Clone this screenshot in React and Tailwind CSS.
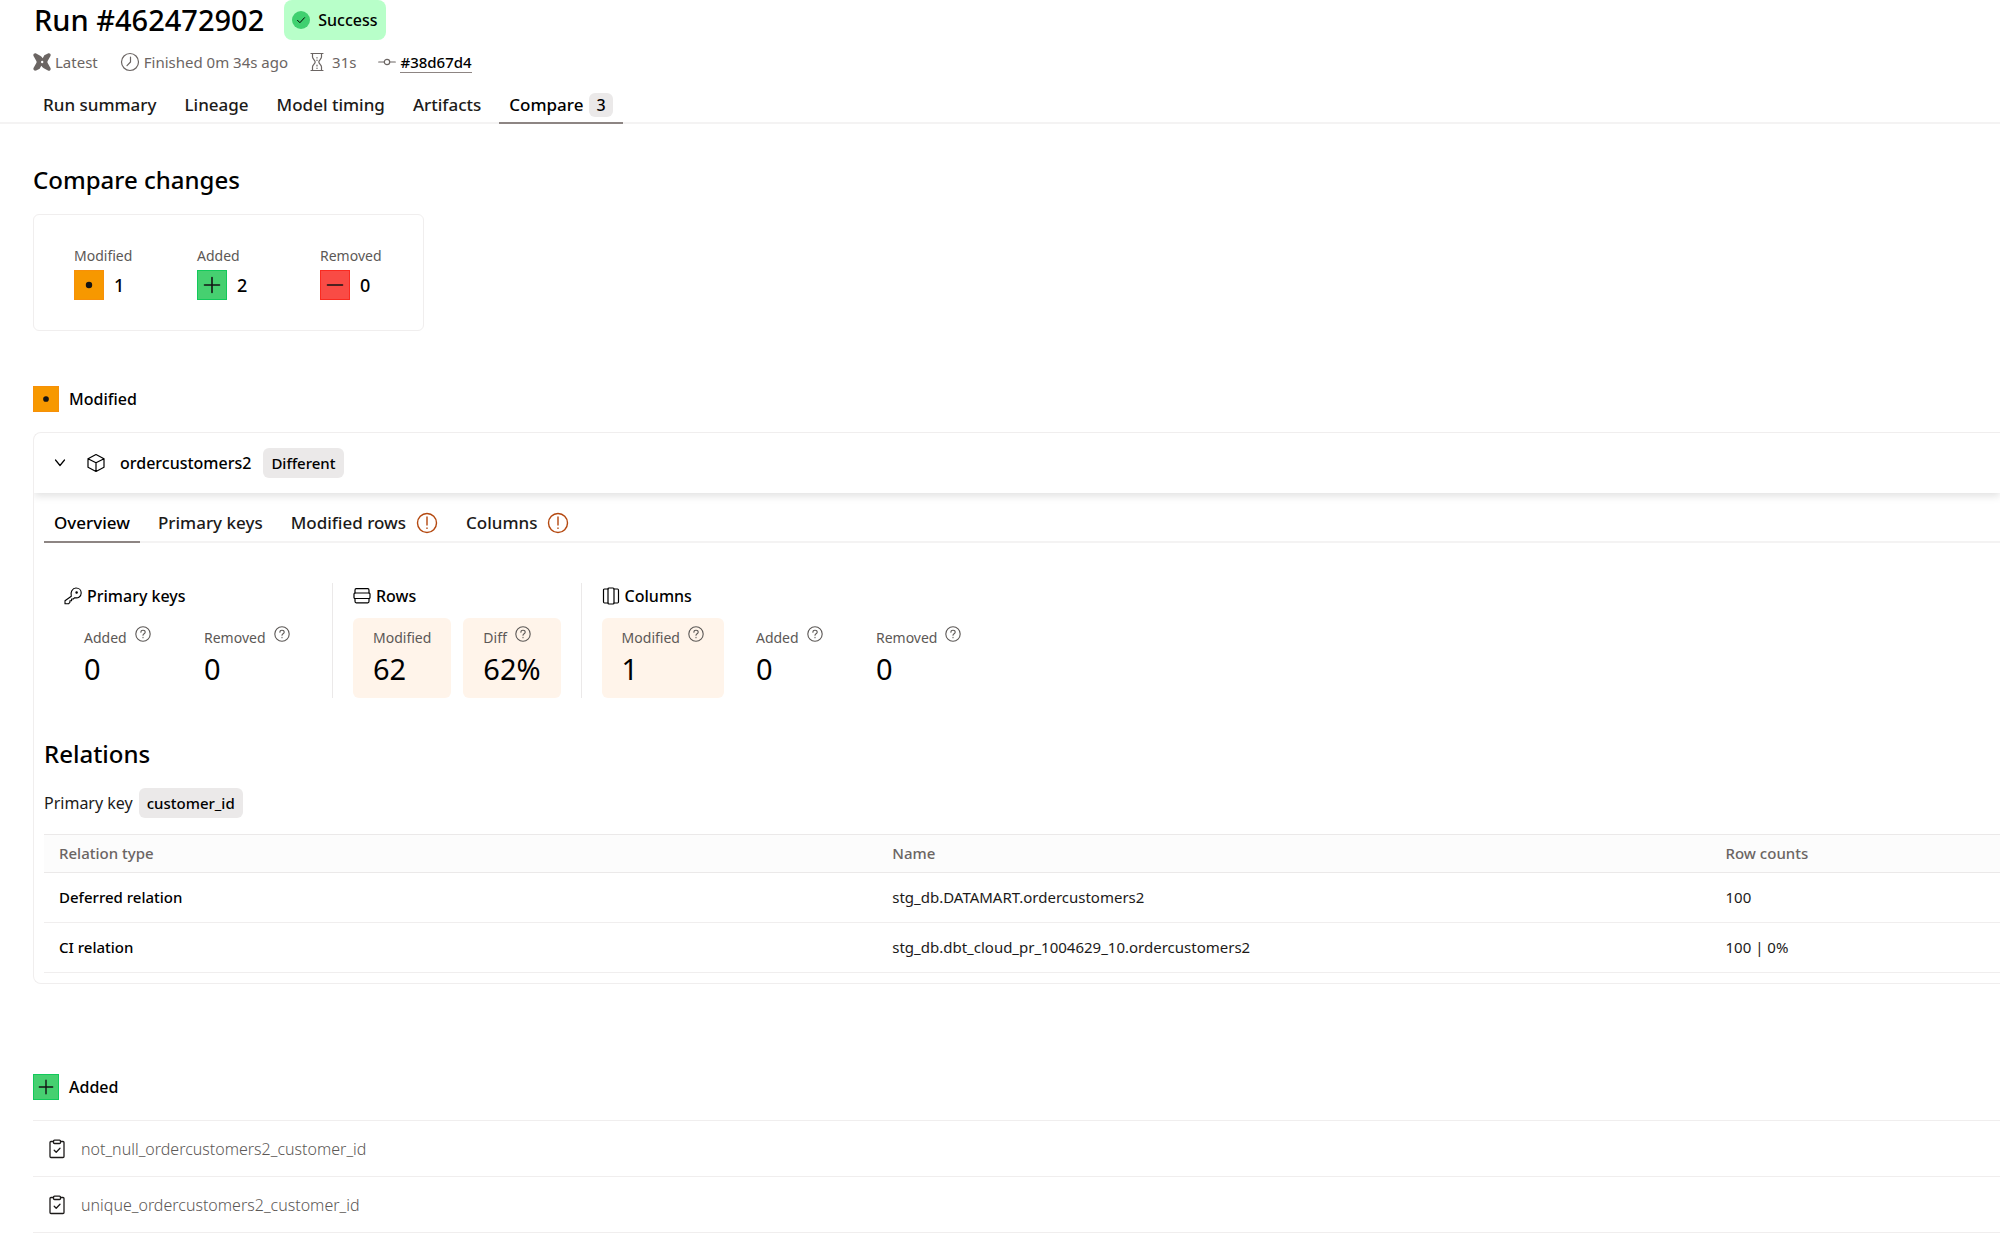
import clsx from 'clsx';

const stroke = {
  fill: 'none',
  stroke: 'currentColor',
  strokeLinecap: 'round',
  strokeLinejoin: 'round',
};

const DbtIcon = () => (
  <svg viewBox="0 0 20 20" className="size-[18px] fill-[#6b6563]" aria-hidden="true">
    <path
      fillRule="evenodd"
      d="M.6 3.4C-.2 1.3 1.5-.2 3.5.5L8 3c1 .7 2 1.500 2.800 2.700L12.600 2.600 16.600.5c2-.9 3.700.8 2.800 2.900L16.600 8.200c-.8 1.200-.8 2.400 0 3.600l2.800 4.800c.9 2.100-.8 3.800-2.800 2.900L12 17c-1-.7-2-1.500-2.800-2.700L7.400 17.400 3.500 19.500c-2 .7-3.700-.8-2.900-2.900l2.800-4.800c.8-1.200.8-2.400 0-3.600zM10.200 8.700a1.300 1.300 0 1 0 0 2.600 1.300 1.300 0 0 0 0-2.600z"
    />
  </svg>
);

const ClockIcon = () => (
  <svg viewBox="0 0 20 20" className="size-5" {...stroke} strokeWidth="1.2" aria-hidden="true">
    <circle cx="10" cy="10" r="8.5" />
    <path d="M10.500 5v5L7 13.600" />
  </svg>
);

const HourglassIcon = () => (
  <svg viewBox="0 0 14 20" className="h-5 w-[14px]" {...stroke} strokeWidth="1.2" aria-hidden="true">
    <path d="M1 1.500h12M1 18.500h12M2.500 1.500v3.600c0 1.700 2.700 3.200 2.700 4.900s-2.700 3.200-2.700 4.900v3.600M11.500 1.500v3.600c0 1.700-2.700 3.200-2.700 4.900s2.700 3.200 2.700 4.900v3.600M7 5.500v.5M7 8v.5M7 13v1M7 16v.5" />
  </svg>
);

const CommitIcon = () => (
  <svg viewBox="0 0 18 18" className="size-[18px]" {...stroke} strokeWidth="1.2" aria-hidden="true">
    <circle cx="9" cy="9" r="2.7" />
    <path d="M.7 9h5.600M11.700 9h5.600" />
  </svg>
);

const ChevronIcon = () => (
  <svg viewBox="0 0 12 12" className="size-3" {...stroke} strokeWidth="1.2" aria-hidden="true">
    <path d="M1.500 3L6 8.500 10.500 3" />
  </svg>
);

const CubeIcon = () => (
  <svg viewBox="0 0 20 20" className="size-5" {...stroke} strokeWidth="1.2" aria-hidden="true">
    <path d="M10 1.500l8 4.200v8.600l-8 4.200-8-4.200V5.700zM2 5.700l8 4.100 8-4.100M10 9.800v8.700" />
  </svg>
);

const AlertIcon = () => (
  <svg viewBox="0 0 22 22" className="size-[22px] text-[#b4480f]" {...stroke} strokeWidth="1.4" aria-hidden="true">
    <circle cx="11" cy="11" r="9.500" />
    <path d="M11 5v8M11 16v.4" />
  </svg>
);

const HelpIcon = () => (
  <svg viewBox="0 0 16 16" className="size-4" {...stroke} strokeWidth="1.1" aria-hidden="true">
    <circle cx="8" cy="8" r="7.200" />
    <path d="M5.900 6.200c0-1.100.9-1.900 2.100-1.900s2.200.8 2.200 1.900c0 1.400-2.200 1.600-2.200 3M8 11.400v.3" />
  </svg>
);

const KeyIcon = () => (
  <svg viewBox="0 0 18 18" className="size-[18px]" {...stroke} strokeWidth="1.1" aria-hidden="true">
    <path d="M7.300 9.200C6 5.500 8.400 1 12 1c3 0 5.200 2.200 5.200 5 0 3.400-3 5.600-6.500 4.700L9.300 12H7.600v1.700H5.900v1.700L4.500 16.800H1v-3z" />
    <circle cx="12.600" cy="5.600" r=".7" fill="currentColor" />
  </svg>
);

const RowsIcon = () => (
  <svg viewBox="0 0 18 18" className="size-[18px]" {...stroke} strokeWidth="1.2" aria-hidden="true">
    <path d="M2 6V3.200C2 2 2.500 1.700 3.200 1.700h11.600c.7 0 1.200.3 1.200 1.500V6M2 11.500v2.800c0 1.200.5 1.500 1.200 1.500h11.600c.7 0 1.200-.3 1.200-1.500v-2.800" />
    <rect x="1" y="6" width="16" height="5.500" rx="1" />
  </svg>
);

const ColumnsIcon = () => (
  <svg viewBox="0 0 18 18" className="size-[18px]" {...stroke} strokeWidth="1.2" aria-hidden="true">
    <path d="M6 2H2.500C1.700 2 1.500 2.500 1.500 3.200v11.600c0 .7.2 1.200 1 1.200H6M12 2h3.500c.8 0 1 .5 1 1.200v11.600c0 .7-.2 1.200-1 1.200H12" />
    <rect x="6" y="1" width="6" height="16" rx="1" />
  </svg>
);

const TestIcon = () => (
  <svg viewBox="0 0 16 20" className="h-5 w-4" {...stroke} strokeWidth="1.3" aria-hidden="true">
    <path d="M4.500 2.500H2c-.6 0-1 .4-1 1v14c0 .6.4 1 1 1h12c.6 0 1-.4 1-1v-14c0-.6-.4-1-1-1h-2.500M5.200 11.300l2 2 3.800-4" />
    <rect x="4.500" y="1.200" width="7" height="3.300" rx="1" />
  </svg>
);

const changeStyles = {
  modified: 'bg-[#f79800] border-[#f79009]',
  added: 'bg-[#46d070] border-[#12c95b]',
  removed: 'bg-[#f94b45] border-[#fa2a20]',
};

function ChangeIcon({ kind, small }) {
  return (
    <span
      className={clsx(
        'flex shrink-0 items-center justify-center border text-[#141414]',
        changeStyles[kind],
        small ? 'size-[26px]' : 'size-[30px]'
      )}
    >
      <svg viewBox="0 0 18 18" className={small ? 'size-4' : 'size-[18px]'} {...stroke} strokeWidth="1.600" aria-hidden="true">
        {kind === 'modified' && <circle cx="9" cy="9" r="2.400" fill="currentColor" />}
        {kind === 'added' && <path d="M1.500 9h15M9 1.500v15" />}
        {kind === 'removed' && <path d="M1.500 9h15" />}
      </svg>
    </span>
  );
}

const Chip = ({ children }) => (
  <span className="rounded-md bg-[#ebe9e9] px-2 py-1 text-[15px] leading-[22px] font-medium text-black">{children}</span>
);

function Stat({ label, value, help, highlight, wide }) {
  return (
    <div className={clsx('h-20 rounded-md px-5 pt-2', highlight && 'bg-[#fff4ea]', wide && 'w-[120px]')}>
      <div className="flex gap-2 text-sm leading-6 whitespace-nowrap text-[#5c5856]">
        {label}
        {help && (
          <button type="button" aria-label={`About ${label}`} className="h-4">
            <HelpIcon />
          </button>
        )}
      </div>
      <div className="text-[29px] leading-[38px] text-black">{value}</div>
    </div>
  );
}

function StatGroup({ icon, title, children, className }) {
  return (
    <div className={className}>
      <h3 className="flex h-[35px] items-center gap-[5px] pb-[9px] font-medium text-black">
        {icon}
        {title}
      </h3>
      <div className="flex gap-3">{children}</div>
    </div>
  );
}

const runTabs = ['Run summary', 'Lineage', 'Model timing', 'Artifacts'];

const summary = [
  { kind: 'modified', label: 'Modified', count: 1 },
  { kind: 'added', label: 'Added', count: 2 },
  { kind: 'removed', label: 'Removed', count: 0 },
];

const relations = [
  { type: 'Deferred relation', name: 'stg_db.DATAMART.ordercustomers2', rows: '100' },
  { type: 'CI relation', name: 'stg_db.dbt_cloud_pr_1004629_10.ordercustomers2', rows: '100 | 0%' },
];

const addedTests = ['not_null_ordercustomers2_customer_id', 'unique_ordercustomers2_customer_id'];

export default function App() {
  return (
    <div className="min-h-screen overflow-x-hidden bg-white font-['Noto_Sans',sans-serif] text-base text-[#1c1a19]">
      <header>
        <div className="flex h-10 items-center gap-5 pl-[34px]">
          <h1 className="text-[29px] font-medium text-black">Run #462472902</h1>
          <span className="flex h-10 items-center gap-2 rounded-lg bg-[#b8ffc9] px-2 font-medium text-black">
            <svg viewBox="0 0 18 18" className="size-[18px]" {...stroke} aria-hidden="true">
              <circle cx="9" cy="9" r="9" fill="#40d070" stroke="none" />
              <path d="M5.500 9.300l2.400 2.400 4.600-5" />
            </svg>
            Success
          </span>
        </div>

        <div className="flex h-11 items-center gap-[22px] pl-[33px] text-[15px] text-[#6b6563]">
          <span className="flex items-center gap-1"><DbtIcon />Latest</span>
          <span className="flex items-center gap-1"><ClockIcon />Finished 0m 34s ago</span>
          <span className="flex items-center gap-2"><HourglassIcon />31s</span>
          <span className="flex items-center gap-1">
            <CommitIcon />
            <a href="#38d67d4" className="border-b border-[#8d8583] leading-5 font-medium text-black">#38d67d4</a>
          </span>
        </div>

        <nav className="flex h-10 border-b-2 border-[#f4f3f3] pl-[29px] text-[17px]">
          {runTabs.map((tab) => (
            <button key={tab} type="button" className="px-[14px] pt-1 font-medium">{tab}</button>
          ))}
          <button type="button" className="-mb-[2px] ml-1 flex items-center gap-[6px] border-b-2 border-[#8d8583] px-[10px] pt-1 font-medium text-black">
            Compare
            <span className="rounded-md bg-[#ebe9e9] px-[7px] text-base">3</span>
          </button>
        </nav>
      </header>

      <main className="pl-[33px]">
        <h2 className="mt-10 text-2xl font-medium text-black">Compare changes</h2>

        <div className="mt-[18px] flex h-[117px] w-[391px] rounded-md border border-[#f0eeee] pt-[27px] pl-10">
          {summary.map(({ kind, label, count }) => (
            <div key={kind} className="w-[123px] shrink-0">
              <div className="text-sm leading-7 text-[#5c5856]">{label}</div>
              <div className="flex items-center gap-[10px] text-lg font-medium text-black">
                <ChangeIcon kind={kind} />
                {count}
              </div>
            </div>
          ))}
        </div>

        <h3 className="mt-[55px] flex h-[26px] items-center gap-[10px] font-medium text-black">
          <ChangeIcon kind="modified" small />
          Modified
        </h3>

        <section className="mt-5 rounded-l-lg border border-r-0 border-[#f0eeee] pb-[10px]">
          <div className="flex h-[60px] items-center pl-5 text-black shadow-[0_3px_8px_rgba(0,0,0,0.12)] [clip-path:inset(0_0_-12px_0)]">
            <button type="button" aria-label="Collapse"><ChevronIcon /></button>
            <span className="ml-5 mr-[14px]"><CubeIcon /></span>
            <span className="mr-3 font-medium">ordercustomers2</span>
            <Chip>Different</Chip>
          </div>

          <nav className="ml-[10px] flex h-[50px] gap-2 border-b-2 border-[#f4f3f3] text-[17px]">
            <button type="button" className="-mb-[2px] border-b-2 border-[#8d8583] px-[10px] pt-3 font-medium text-black">Overview</button>
            <button type="button" className="px-[10px] pt-3 font-medium">Primary keys</button>
            <button type="button" className="flex items-center gap-[10px] px-[10px] pt-3 font-medium">Modified rows <AlertIcon /></button>
            <button type="button" className="flex items-center gap-[10px] px-[10px] pt-3 font-medium">Columns <AlertIcon /></button>
          </nav>

          <div className="mt-10 flex">
            <StatGroup icon={<KeyIcon />} title="Primary keys" className="w-[298px] pl-[30px]">
              <div className="flex">
                <Stat label="Added" value="0" help wide />
                <Stat label="Removed" value="0" help wide />
              </div>
            </StatGroup>
            <StatGroup icon={<RowsIcon />} title="Rows" className="border-l border-[#ebe9e9] px-5">
              <Stat label="Modified" value="62" highlight />
              <Stat label="Diff" value="62%" help highlight />
            </StatGroup>
            <StatGroup icon={<ColumnsIcon />} title="Columns" className="border-l border-[#ebe9e9] px-5">
              <Stat label="Modified" value="1" help highlight />
              <div className="flex">
                <Stat label="Added" value="0" help wide />
                <Stat label="Removed" value="0" help wide />
              </div>
            </StatGroup>
          </div>

          <div className="ml-[10px] pt-10">
            <h2 className="text-2xl font-medium text-black">Relations</h2>
            <p className="mt-[18px] mb-4 flex items-center gap-[6px]">
              Primary key <Chip>customer_id</Chip>
            </p>
            <table className="w-full table-fixed border-t border-[#ebe9e9] text-left text-[15px]">
              <thead>
                <tr className="h-[38px] border-b border-[#ebe9e9] bg-[#fcfcfc] text-[#6b6563]">
                  <th className="w-[42.6%] pl-[15px] font-medium">Relation type</th>
                  <th className="w-[42.6%] pl-[15px] font-medium">Name</th>
                  <th className="pl-[15px] font-medium">Row counts</th>
                </tr>
              </thead>
              <tbody>
                {relations.map((r) => (
                  <tr key={r.type} className="h-[50px] border-b border-[#f0eeee]">
                    <td className="pl-[15px] font-medium text-black">{r.type}</td>
                    <td className="pl-[15px]">{r.name}</td>
                    <td className="pl-[15px]">{r.rows}</td>
                  </tr>
                ))}
              </tbody>
            </table>
          </div>
        </section>

        <h3 className="mt-[90px] mb-5 flex h-[26px] items-center gap-[10px] font-medium text-black">
          <ChangeIcon kind="added" small />
          Added
        </h3>
        <ul className="border-t border-[#f0eeee]">
          {addedTests.map((name) => (
            <li key={name} className="flex h-14 items-center gap-4 border-b border-[#f0eeee] pl-4 font-light text-[#5c5856]">
              <span className="text-[#1c1a19]"><TestIcon /></span>
              {name}
            </li>
          ))}
        </ul>
      </main>
    </div>
  );
}
